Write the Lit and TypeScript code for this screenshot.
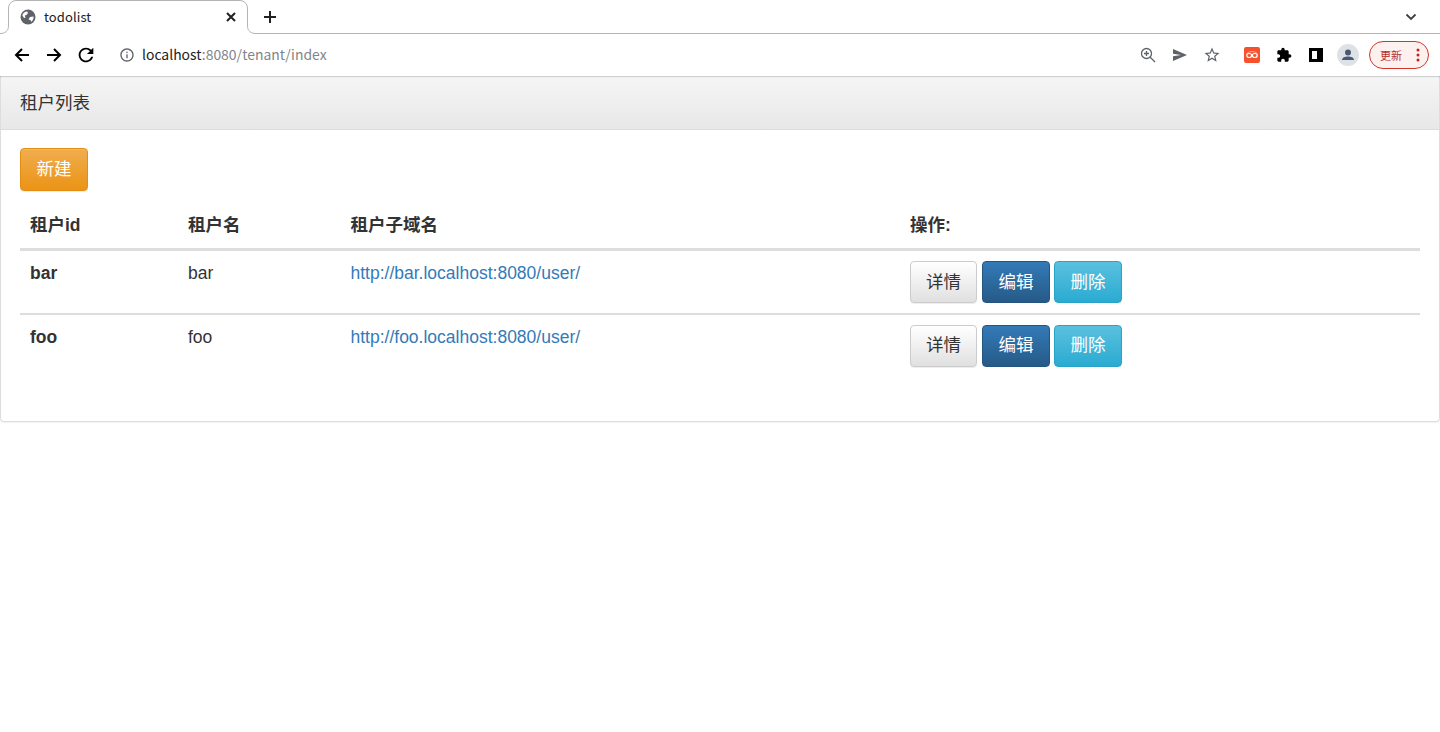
import { LitElement, html, css } from "lit";
import { customElement } from "lit/decorators.js";

const rows = [
  { id: "bar", name: "bar", url: "http://bar.localhost:8080/user/" },
  { id: "foo", name: "foo", url: "http://foo.localhost:8080/user/" },
];

@customElement("app-root")
export class AppRoot extends LitElement {
  static styles = css`
    :host { display: block; height: 732px; background: #fff; overflow: hidden; font-family: "Liberation Sans", "Noto Sans CJK SC", sans-serif; color: #333; }
    svg { display: block; flex: none; }
    .tabstrip { height: 33px; border-bottom: 1px solid #b4b4b4; display: flex; align-items: flex-end; padding-left: 8px; position: relative; background: #fff; }
    .tab { width: 240px; display: flex; align-items: center; position: relative; margin-bottom: -1px; height: 34px; font: 13px "Noto Sans CJK SC", sans-serif; color: #202124; }
    .tabshape { position: absolute; left: -8px; top: 0; }
    .tab > :not(.tabshape) { position: relative; }
    .favicon { margin-left: 12px; }
    .title { margin-left: 8px; flex: 1; letter-spacing: 0.1px; padding-bottom: 2px; }
    .close { margin-right: 9px; margin-bottom: 1px; }
    .plus { margin-left: 15px; margin-bottom: 9px; }
    .spacer { flex: 1; }
    .chev { margin-right: 22px; margin-bottom: 9px; }
    .toolbar { height: 42px; display: flex; align-items: center; background: #fff; position: relative; z-index: 1; box-shadow: 0 1px 1px rgba(0,0,0,.15); }
    .nav { margin-left: 14px; }
    .nav2 { margin-left: 16px; }
    .nav3 { margin-left: 13px; }
    .info { margin-left: 22px; }
    .addr { margin-left: 7px; font: 13.95px "Noto Sans CJK SC", sans-serif; color: #80868b; flex: 1; padding-bottom: 2px; }
    .addr b { font-weight: 400; color: #202124; }
    .tools { display: flex; align-items: center; }
    .ml-15 { margin-left: 15px; }
    .ml-16 { margin-left: 16px; }
    .ml-23 { margin-left: 23px; }
    .ml-13 { margin-left: 13px; }
    .upd { width: 60px; height: 28px; box-sizing: border-box; margin: 0 11px 0 10px; border: 1px solid #d0352b; border-radius: 14px; background: #fdf1f0; color: #b3332b; font: 11px "Noto Sans CJK SC", sans-serif; display: flex; align-items: center; padding-left: 10px; justify-content: space-between; }
    .upd svg { margin-right: 8px; }
    .panel { border: 1px solid #ddd; border-top: none; border-radius: 0 0 4px 4px; box-shadow: 0 1px 1px rgba(0,0,0,.05); height: 346px; box-sizing: border-box; }
    .heading { height: 54px; box-sizing: border-box; border-bottom: 1px solid #ddd; background: linear-gradient(#f5f5f5, #e8e8e8); padding: 0 19px 2px; display: flex; align-items: center; font-size: 17.5px; color: #333; }
    .body { padding: 18px 19px 0; }
    .btn { font: 17.5px "Liberation Sans", "Noto Sans CJK SC", sans-serif; display: inline-flex; align-items: center; justify-content: center; box-sizing: border-box; border-radius: 4px; border: 1px solid transparent; padding: 0 0 4px; }
    .new { width: 68px; height: 43px; color: #fff; background: linear-gradient(#f0ad4e, #eb9316); border-color: #e38d13; box-shadow: inset 0 1px 0 rgba(255,255,255,.15), 0 1px 1px rgba(0,0,0,.075); }
    table { width: 1400px; border-collapse: separate; border-spacing: 0; table-layout: fixed; margin-top: 14px; font-size: 17.5px; }
    th { text-align: left; height: 46px; padding: 0 10px 7px; box-sizing: border-box; font-weight: 700; border-bottom: 3px solid #ddd; }
    td { padding: 10px 10px 0; vertical-align: top; height: 64px; box-sizing: border-box; line-height: 24px; border-bottom: 2px solid #ddd; }
    tr:last-child td { border-bottom: none; }
    tr:last-child .sm { padding-bottom: 6px; }
    td:first-child { font-weight: 700; }
    a { color: #337ab7; text-decoration: none; }
    .ops-row { display: flex; gap: 4px; }
    .sm { height: 42px; width: 68px; }
    .detail { width: 67px; margin-right: 1px; color: #333; background: linear-gradient(#fff, #e0e0e0); border-color: #ccc; box-shadow: inset 0 1px 0 rgba(255,255,255,.15), 0 1px 1px rgba(0,0,0,.075); }
    .edit { color: #fff; background: linear-gradient(#337ab7, #265a88); border-color: #245580; }
    .del { color: #fff; background: linear-gradient(#5bc0de, #2aabd2); border-color: #28a4c9; }
    .c1 { width: 158px; } .c2 { width: 162.5px; } .c3 { width: 559.5px; } .c4 { width: 520px; }
  `;

  render() {
    return html`
      <div class="tabstrip">
        <div class="tab">
          <svg class="tabshape" width="256" height="34" viewBox="0 0 256 34"><path d="M0 33.500C5 33.500 8.500 31 8.500 26V8A7.500 7.500 0 0 1 16 .5H240A7.500 7.500 0 0 1 247.500 8V26C247.500 31 251 33.500 256 33.500V34H0z" fill="#fff" stroke="none"/><path d="M0 33.500C5 33.500 8.500 31 8.500 26V8A7.500 7.500 0 0 1 16 .5H240A7.500 7.500 0 0 1 247.500 8V26C247.500 31 251 33.500 256 33.500" fill="none" stroke="#b4b4b4"/></svg>
          <svg class="favicon" width="16" height="16" viewBox="0 0 16 16"><circle cx="8" cy="8" r="7.500" fill="#5f6368"/><path fill="#fff" d="M2.300 6.200C3 4 5 2.600 7.200 2.500L8 4 6.500 6 4.800 6.500 5.500 9 3.800 8.700zM10 8l3.500-.5c.3 2-.6 4-2.300 5.200L10.500 11 8.500 10.500z"/></svg>
          <span class="title">todolist</span>
          <svg class="close" width="16" height="16" viewBox="0 0 16 16" stroke="#202124" stroke-width="2" fill="none"><path d="M4 4l8 8M12 4l-8 8"/></svg>
        </div>
        <svg class="plus" width="14" height="14" viewBox="0 0 14 14" stroke="#202124" stroke-width="2" fill="none"><path d="M7 1v12M1 7h12"/></svg>
        <div class="spacer"></div>
        <svg class="chev" width="14" height="14" viewBox="0 0 14 14" stroke="#3c4043" stroke-width="1.800" fill="none"><path d="M2.500 4.500L7 9l4.500-4.500"/></svg>
      </div>
      <div class="toolbar">
        <svg class="nav" width="16" height="16" viewBox="0 0 16 16" stroke="#000" stroke-width="2" fill="none"><path d="M15 8H2M8 2L2 8l6 6"/></svg>
        <svg class="nav2" width="16" height="16" viewBox="0 0 16 16" stroke="#000" stroke-width="2" fill="none"><path d="M1 8h13M8 2l6 6-6 6"/></svg>
        <svg class="nav3" width="22" height="22" viewBox="0 0 24 24" fill="#000"><path d="M17.650 6.350A7.958 7.958 0 0 0 12 4c-4.420 0-7.990 3.580-7.990 8s3.570 8 7.990 8c3.730 0 6.840-2.550 7.730-6h-2.080A5.990 5.990 0 0 1 12 18c-3.310 0-6-2.690-6-6s2.690-6 6-6c1.660 0 3.140.69 4.220 1.780L13 11h7V4l-2.350 2.350z"/></svg>
        <svg class="info" width="16" height="16" viewBox="0 0 24 24" fill="#5f6368"><path d="M11 7h2v2h-2zm0 4h2v6h-2zm1-9C6.480 2 2 6.480 2 12s4.480 10 10 10 10-4.480 10-10S17.520 2 12 2zm0 18c-4.410 0-8-3.590-8-8s3.590-8 8-8 8 3.590 8 8-3.590 8-8 8z"/></svg>
        <div class="addr"><b>localhost</b>:8080/tenant/index</div>
        <div class="tools">
          <svg width="16" height="16" viewBox="0 0 16 16" fill="none" stroke="#5f6368" stroke-width="1.300"><circle cx="6.500" cy="6.500" r="5"/><path d="M10.200 10.200L15 15M4 6.500h5M6.500 4v5"/></svg>
          <svg class="ml-16" width="16" height="16" viewBox="0 0 16 16" fill="#5f6368"><path d="M1 2L15 8 1 14V9.300L9 8 1 6.700z"/></svg>
          <svg class="ml-15" width="18" height="18" viewBox="0 0 24 24" fill="#5f6368"><path d="M22 9.240l-7.190-.62L12 2 9.190 8.630 2 9.240l5.460 4.730L5.820 21 12 17.270 18.180 21l-1.630-7.030L22 9.240zM12 15.400l-3.760 2.270 1-4.280-3.320-2.880 4.380-.38L12 6.100l1.710 4.040 4.380.38-3.320 2.880 1 4.280L12 15.400z"/></svg>
          <svg class="ml-23" width="16" height="16" viewBox="0 0 16 16"><rect width="16" height="16" rx="2" fill="#f4512c"/><g fill="none" stroke="#fff"><ellipse cx="5.200" cy="8.500" rx="2.400" ry="2" stroke-width="1.200"/><ellipse cx="10.800" cy="8.500" rx="2.400" ry="2" stroke-width="1.200"/><path d="M2.500 6.500q5.500-4 11 0" stroke-width=".7" opacity=".7"/></g></svg>
          <svg class="ml-16" width="16" height="16" viewBox="0 0 24 24" fill="#000"><path d="M20.500 11H19V7c0-1.100-.9-2-2-2h-4V3.500C13 2.120 11.880 1 10.500 1S8 2.120 8 3.500V5H4c-1.100 0-1.990.9-1.990 2v3.800H3.500c1.490 0 2.700 1.210 2.700 2.700s-1.210 2.700-2.700 2.700H2V20c0 1.100.9 2 2 2h3.800v-1.500c0-1.490 1.210-2.700 2.700-2.700 1.490 0 2.700 1.210 2.700 2.700V22H17c1.100 0 2-.9 2-2v-4h1.500c1.380 0 2.500-1.120 2.500-2.500S21.880 11 20.500 11z"/></svg>
          <svg class="ml-16" width="16" height="16" viewBox="0 0 16 16"><path fill="#000" d="M1 1h14v14H1z"/><path fill="#fff" d="M4 4h5v8H4z"/></svg>
          <svg class="ml-13" width="22" height="22" viewBox="0 0 22 22"><circle cx="11" cy="11" r="11" fill="#dee1e6"/><circle cx="11" cy="8.500" r="3" fill="#4a5a73"/><path fill="#4a5a73" d="M5 16c0-2.500 3-3.500 6-3.500s6 1 6 3.500z"/></svg>
          <div class="upd"><span>更新</span><svg width="4" height="14" viewBox="0 0 4 14" fill="#c5221f"><circle cx="2" cy="2" r="1.500"/><circle cx="2" cy="7" r="1.500"/><circle cx="2" cy="12" r="1.500"/></svg></div>
        </div>
      </div>
      <div class="panel">
        <div class="heading">租户列表</div>
        <div class="body">
          <button class="btn new">新建</button>
          <table>
            <colgroup><col class="c1" /><col class="c2" /><col class="c3" /><col class="c4" /></colgroup>
            <thead><tr><th>租户id</th><th>租户名</th><th>租户子域名</th><th>操作:</th></tr></thead>
            <tbody>
              ${rows.map(r => html`<tr>
                <td>${r.id}</td><td>${r.name}</td><td><a href="#">${r.url}</a></td>
                <td><div class="ops-row">
                  <button class="btn sm detail">详情</button>
                  <button class="btn sm edit">编辑</button>
                  <button class="btn sm del">删除</button>
                </div></td>
              </tr>`)}
            </tbody>
          </table>
        </div>
      </div>
    `;
  }
}
